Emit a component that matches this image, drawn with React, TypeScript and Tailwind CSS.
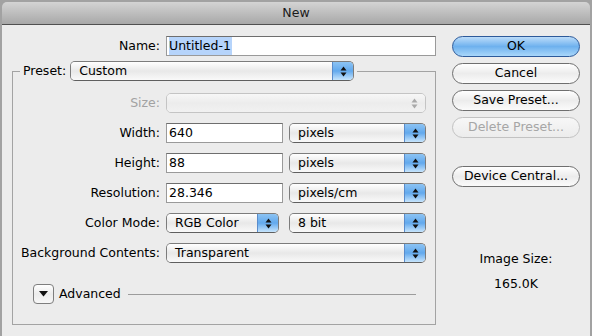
import React from "react";

const font = "font-['DejaVu_Sans',sans-serif]";

function Arrows({ dim }: { dim?: boolean }) {
  const c = dim ? "#a9a9a9" : "#111";
  return (
    <svg width="7" height="11" viewBox="0 0 7 11">
      <path d="M3.5 0.5 L6.5 4.5 L0.5 4.5 Z" fill={c} />
      <path d="M0.5 6.5 L6.5 6.5 L3.5 10.5 Z" fill={c} />
    </svg>
  );
}

function Popup({ value, width, disabled }: { value?: string; width: string; disabled?: boolean }) {
  return (
    <div
      className={`${width} h-[20px] flex rounded-[5px] border overflow-hidden ${
        disabled ? "border-[#c4c4c4]" : "border-[#7c7c7c] border-b-[#5f5f5f]"
      }`}
    >
      <div
        className={`flex-1 flex items-center pl-[8px] text-[12.5px] text-black bg-gradient-to-b ${
          disabled ? "from-[#f7f7f7] via-[#ececec] to-[#f1f1f1]" : "from-white via-[#e8e8e8] to-[#f9f9f9]"
        }`}
      >
        {value}
      </div>
      <div
        className={`w-[21px] flex items-center justify-center ${
          disabled
            ? "bg-gradient-to-b from-[#f7f7f7] via-[#ececec] to-[#f1f1f1]"
            : "bg-gradient-to-b from-[#8cc3f3] via-[#62a9ed] to-[#c6e4fc] border-l border-[#5a8ccb]"
        }`}
      >
        <Arrows dim={disabled} />
      </div>
    </div>
  );
}

function Field({ value, width }: { value: string; width: string }) {
  return (
    <div className={`${width} h-[20px] flex items-center pl-[2px] bg-white border border-[#9a9a9a] border-t-[#6e6e6e] text-[12.5px] text-black`}>
      {value}
    </div>
  );
}

function Button({ label, primary, disabled, className = "" }: { label: string; primary?: boolean; disabled?: boolean; className?: string }) {
  const look = primary
    ? "border-[#2d5a9a] bg-gradient-to-b from-[#bcdcf9] via-[#6eb1ee] to-[#a9d7fa] text-black"
    : disabled
    ? "border-[#c2c2c2] bg-gradient-to-b from-[#f7f7f7] to-[#ececec] text-[#a6a6a6]"
    : "border-[#6f6f6f] bg-gradient-to-b from-white via-[#ececec] to-[#fbfbfb] text-black";
  return (
    <div className={`h-[21px] w-[128px] rounded-full border flex items-center justify-center text-[12.5px] ${look} ${className}`}>
      {label}
    </div>
  );
}

function Row({ label, children, dim }: { label: string; children: React.ReactNode; dim?: boolean }) {
  return (
    <div className="flex items-center h-[20px]">
      <div className={`w-[147px] text-right text-[12.5px] whitespace-nowrap ${dim ? "text-[#a2a2a2]" : "text-black"}`}>{label}</div>
      <div className="ml-[6px] flex items-center">{children}</div>
    </div>
  );
}

export default function App() {
  return (
    <div className={`w-[592px] h-[336px] bg-[#a2a2a2] px-[2px] pt-[2px] overflow-hidden ${font}`}>
      <div className="h-[23px] rounded-t-[5px] bg-gradient-to-b from-[#d4d4d4] to-[#a8a8a8] border-b border-[#505050] flex items-center justify-center text-[12.5px] text-[#1a1a1a]">
        New
      </div>
      <div className="h-[320px] bg-[#ececec] flex">
        <div className="ml-[10px] w-[424px] flex flex-col">
          <div className="mt-[11px] flex items-center">
            <div className="w-[148px] text-right text-[12.5px] text-black">Name:</div>
            <div className="ml-[6px] w-[270px] h-[20px] flex items-center pl-[2px] bg-white border border-[#9a9a9a] border-t-[#6e6e6e] text-[12.5px] text-black">
              <span className="bg-[#b6d4fb] pr-[1px]">Untitled-1</span>
            </div>
          </div>
          <fieldset className="mt-[5px] w-[424px] h-[264px] border border-[#a3a3a3]">
            <legend className="ml-[7px] px-[3px]">
              <div className="flex items-center">
                <span className="text-[12.5px] text-black">Preset:</span>
                <div className="ml-[4px]">
                  <Popup value="Custom" width="w-[284px]" />
                </div>
              </div>
            </legend>
            <div className="pt-[12px] flex flex-col gap-[10px]">
              <Row label="Size:" dim>
                <Popup width="w-[260px]" disabled />
              </Row>
              <Row label="Width:">
                <Field value="640" width="w-[117px]" />
                <div className="ml-[6px]">
                  <Popup value="pixels" width="w-[137px]" />
                </div>
              </Row>
              <Row label="Height:">
                <Field value="88" width="w-[117px]" />
                <div className="ml-[6px]">
                  <Popup value="pixels" width="w-[137px]" />
                </div>
              </Row>
              <Row label="Resolution:">
                <Field value="28.346" width="w-[117px]" />
                <div className="ml-[6px]">
                  <Popup value="pixels/cm" width="w-[137px]" />
                </div>
              </Row>
              <Row label="Color Mode:">
                <Popup value="RGB Color" width="w-[113px]" />
                <div className="ml-[10px]">
                  <Popup value="8 bit" width="w-[137px]" />
                </div>
              </Row>
              <Row label="Background Contents:">
                <Popup value="Transparent" width="w-[260px]" />
              </Row>
            </div>
            <div className="mt-[21px] ml-[20px] mr-[19px] flex items-center">
              <div className="w-[21px] h-[20px] rounded-[4px] border border-[#7e7e7e] bg-gradient-to-b from-white via-[#ececec] to-[#f7f7f7] flex items-center justify-center">
                <svg width="9" height="6" viewBox="0 0 9 6">
                  <path d="M0 0 L9 0 L4.5 5.5 Z" fill="#111" />
                </svg>
              </div>
              <span className="ml-[5px] text-[12.5px] text-black">Advanced</span>
              <div className="ml-[7px] flex-1 border-t border-[#9c9c9c]" />
            </div>
          </fieldset>
        </div>
        <div className="ml-[16px] w-[128px] pt-[11px] flex flex-col items-center">
          <Button label="OK" primary />
          <Button label="Cancel" className="mt-[6px]" />
          <Button label="Save Preset..." className="mt-[6px]" />
          <Button label="Delete Preset..." disabled className="mt-[6px]" />
          <Button label="Device Central..." className="mt-[28px]" />
          <div className="mt-[64px] text-[12.5px] text-black leading-[16px]">Image Size:</div>
          <div className="mt-[9px] text-[12.5px] text-black leading-[16px]">165.0K</div>
        </div>
      </div>
    </div>
  );
}
